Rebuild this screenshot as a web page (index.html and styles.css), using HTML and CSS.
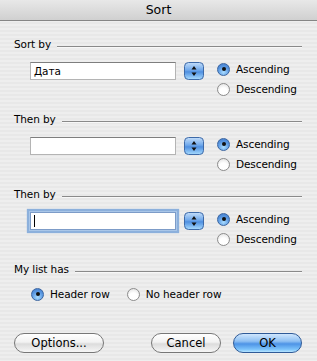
FILE: index.html
```html
<!DOCTYPE html>
<html>
<head>
<meta charset="utf-8">
<link rel="stylesheet" href="styles.css">
</head>
<body>
<div class="window">
  <div class="titlebar">Sort</div>
  <div class="content">
    <div class="section">
      <div class="header"><span class="label">Sort by</span><span class="rule"></span></div>
      <div class="row">
        <div class="field">Дата</div>
        <span class="stepper"><svg width="20" height="18" viewBox="0 0 20 18"><defs><linearGradient id="sg1" x1="0" y1="0" x2="0" y2="1"><stop offset="0" stop-color="#c4defa"/><stop offset="0.45" stop-color="#6fa8eb"/><stop offset="0.55" stop-color="#4f8fe0"/><stop offset="1" stop-color="#a8dcff"/></linearGradient></defs><rect x="0.5" y="0.5" width="19" height="17" rx="4" fill="url(#sg1)" stroke="#3e6aa8"/><path d="M10 4 L12.5 7.5 L7.5 7.5 Z M10 14 L12.5 10.5 L7.5 10.5 Z" fill="#111"/></svg></span>
        <div class="radios">
          <div class="opt"><span class="radio on"></span>Ascending</div>
          <div class="opt"><span class="radio"></span>Descending</div>
        </div>
      </div>
    </div>
    <div class="section">
      <div class="header"><span class="label">Then by</span><span class="rule"></span></div>
      <div class="row">
        <div class="field"></div>
        <span class="stepper"><svg width="20" height="18" viewBox="0 0 20 18"><defs><linearGradient id="sg2" x1="0" y1="0" x2="0" y2="1"><stop offset="0" stop-color="#c4defa"/><stop offset="0.45" stop-color="#6fa8eb"/><stop offset="0.55" stop-color="#4f8fe0"/><stop offset="1" stop-color="#a8dcff"/></linearGradient></defs><rect x="0.5" y="0.5" width="19" height="17" rx="4" fill="url(#sg2)" stroke="#3e6aa8"/><path d="M10 4 L12.5 7.5 L7.5 7.5 Z M10 14 L12.5 10.5 L7.5 10.5 Z" fill="#111"/></svg></span>
        <div class="radios">
          <div class="opt"><span class="radio on"></span>Ascending</div>
          <div class="opt"><span class="radio"></span>Descending</div>
        </div>
      </div>
    </div>
    <div class="section">
      <div class="header"><span class="label">Then by</span><span class="rule"></span></div>
      <div class="row">
        <div class="field focus"><span class="caret"></span></div>
        <span class="stepper"><svg width="20" height="18" viewBox="0 0 20 18"><defs><linearGradient id="sg3" x1="0" y1="0" x2="0" y2="1"><stop offset="0" stop-color="#c4defa"/><stop offset="0.45" stop-color="#6fa8eb"/><stop offset="0.55" stop-color="#4f8fe0"/><stop offset="1" stop-color="#a8dcff"/></linearGradient></defs><rect x="0.5" y="0.5" width="19" height="17" rx="4" fill="url(#sg3)" stroke="#3e6aa8"/><path d="M10 4 L12.5 7.5 L7.5 7.5 Z M10 14 L12.5 10.5 L7.5 10.5 Z" fill="#111"/></svg></span>
        <div class="radios">
          <div class="opt"><span class="radio on"></span>Ascending</div>
          <div class="opt"><span class="radio"></span>Descending</div>
        </div>
      </div>
    </div>
    <div class="section last">
      <div class="header"><span class="label">My list has</span><span class="rule"></span></div>
      <div class="hrow">
        <div class="opt"><span class="radio on"></span>Header row</div>
        <div class="opt second"><span class="radio"></span>No header row</div>
      </div>
    </div>
    <div class="buttons">
      <span class="btn options">Options...</span>
      <span class="btn cancel">Cancel</span>
      <span class="btn ok">OK</span>
    </div>
  </div>
</div>
</body>
</html>
```
FILE: styles.css
```css
html, body {
  margin: 0;
  padding: 0;
}
body {
  width: 317px;
  height: 361px;
  overflow: hidden;
  font-family: "DejaVu Sans", "Liberation Sans", sans-serif;
  font-size: 10.5px;
  letter-spacing: -0.1px;
  color: #000;
}
.window {
  width: 317px;
  height: 361px;
  background: repeating-linear-gradient(#eeeeee 0 2px, #e8e8e8 2px 4px);
}
.titlebar {
  height: 20px;
  line-height: 20px;
  text-align: center;
  font-size: 12.5px;
  letter-spacing: 0;
  background: linear-gradient(#e8e8e8, #d0d0d0);
  border-bottom: 1px solid #858585;
}
.content {
  padding: 16px 15px 0 14px;
}
.section {
  height: 75px;
}
.header {
  display: flex;
  align-items: center;
  height: 14px;
}
.label {
  white-space: nowrap;
}
.rule {
  flex: 1;
  margin-left: 6px;
  margin-top: 5px;
  border-top: 1px solid #8a8a8a;
  border-bottom: 1px solid #f8f8f8;
}
.row {
  display: flex;
  align-items: flex-start;
  margin-top: 11px;
  padding-left: 16px;
}
.field {
  height: 16px;
  background: #fff;
  border: 1px solid #b4b4b4;
  border-top-color: #7e7e7e;
  line-height: 16px;
  padding-left: 3px;
  box-sizing: content-box;
  width: 141px;
}
.field.focus {
  box-shadow: 0 0 0 1px #a9c6e8, 0 0 1px 3px #8cb0dc;
  border-color: #7d9cc8;
}
.caret {
  display: inline-block;
  width: 1px;
  height: 12px;
  background: #000;
  vertical-align: middle;
  margin-top: -2px;
}
.stepper {
  margin-left: 8px;
  width: 20px;
  height: 18px;
  display: block;
}
.stepper svg {
  display: block;
}
.radios {
  margin-left: 13px;
  margin-top: -3px;
}
.opt {
  display: flex;
  align-items: center;
  height: 20px;
  white-space: nowrap;
}
.radio {
  width: 13px;
  height: 13px;
  border-radius: 50%;
  box-sizing: border-box;
  border: 1px solid #8c8c8c;
  background: radial-gradient(circle at 50% 70%, #ffffff 0 40%, #dcdcdc 100%);
  margin-right: 6px;
  position: relative;
  flex: none;
}
.radio.on {
  border-color: #3b65a0;
  background: radial-gradient(circle at 50% 75%, #a9dcff 0, #5a98e2 55%, #3f78c8 100%);
}
.radio.on::after {
  content: "";
  position: absolute;
  left: 3.5px;
  top: 3.5px;
  width: 4px;
  height: 4px;
  border-radius: 50%;
  background: #111;
}
.hrow {
  display: flex;
  margin-top: 8px;
  padding-left: 17px;
}
.opt.second {
  margin-left: 17px;
}
.buttons {
  display: flex;
  margin-top: -4px;
}
.btn {
  display: flex;
  align-items: center;
  justify-content: center;
  height: 20px;
  box-sizing: border-box;
  border: 1px solid #777;
  border-radius: 10px;
  background: linear-gradient(#ffffff 0%, #f2f2f2 45%, #dcdcdc 55%, #f6f6f6 100%);
  font-size: 11.5px;
  letter-spacing: 0;
}
.options {
  width: 90px;
}
.cancel {
  width: 70px;
  margin-left: 47px;
}
.ok {
  width: 69px;
  margin-left: 12px;
  border-color: #2f5a97;
  background: linear-gradient(#cfe6fd 0%, #8fc0f3 40%, #4d93e6 55%, #7cc3fb 85%, #b6e4ff 100%);
}
```
